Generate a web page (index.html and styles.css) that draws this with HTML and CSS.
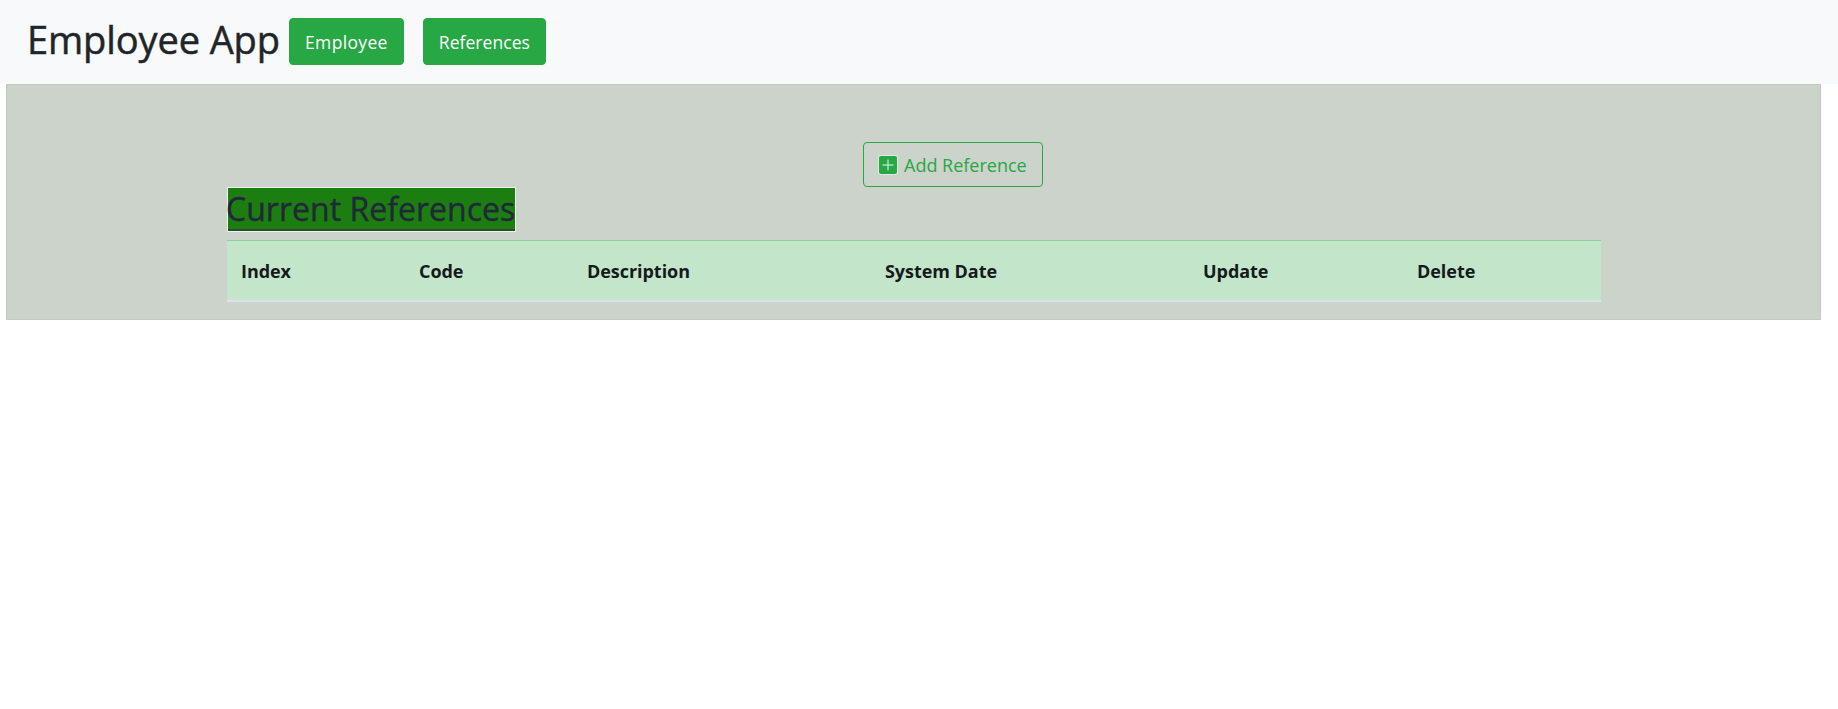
FILE: index.html
```html
<!DOCTYPE html>
<html lang="en">
<head>
<meta charset="utf-8">
<title>Employee App</title>
<link rel="stylesheet" href="styles.css">
</head>
<body>
<nav class="navbar">
  <span class="brand">Employee App</span>
  <a class="btn-nav btn-emp">Employee</a>
  <a class="btn-nav btn-ref">References</a>
</nav>
<main class="panel">
  <div class="content">
    <div class="add-row">
      <button class="btn-add">
        <svg class="plus" width="20" height="20" viewBox="0 0 20 20"><rect x="0" y="0" width="20" height="20" rx="3" fill="#e1e8e0"/><rect x="1" y="1" width="18" height="18" rx="2" fill="#28a745"/><path d="M10 4.5v11M4.5 10h11" stroke="#e8f5ea" stroke-width="1" fill="none"/></svg>
        <span>Add Reference</span>
      </button>
    </div>
    <h2 class="title">Current References</h2>
    <table class="refs">
      <thead>
        <tr>
          <th class="c1">Index</th>
          <th class="c2">Code</th>
          <th class="c3">Description</th>
          <th class="c4">System Date</th>
          <th class="c5">Update</th>
          <th class="c6">Delete</th>
        </tr>
      </thead>
    </table>
  </div>
</main>
</body>
</html>
```
FILE: styles.css
```css
* { box-sizing: border-box; }
html, body { margin: 0; background: #fff; }
body { font-family: "Open Sans", "Noto Sans", sans-serif; color: #212529; }
.navbar {
  display: flex;
  align-items: center;
  height: 84px;
  padding: 0 0 1px 27px;
  background: #f8f9fa;
}
.brand { width: 262px; padding-bottom: 4px; font-size: 38px; line-height: 1.2; letter-spacing: -0.1px; color: #212529; -webkit-text-stroke: 0.5px #212529; white-space: nowrap; }
.btn-nav {
  display: flex;
  align-items: center;
  justify-content: center;
  height: 47px;
  margin-right: 19px;
  padding: 0 15px;
  background: #28a745;
  border: 1px solid #28a745;
  border-radius: 4px;
  color: #fff;
  font-size: 17.5px;
}
.btn-emp { letter-spacing: 0.35px; }
.btn-ref { letter-spacing: 0.05px; }
.panel {
  width: 1815px;
  height: 236px;
  margin-left: 6px;
  background: #ccd3ca;
  border: 1px solid #c2cbc0;
  padding-top: 57px;
}
.content { width: 1374px; margin-left: 220px; }
.add-row { display: flex; padding-left: 636px; }
.btn-add {
  display: flex;
  align-items: center;
  gap: 6px;
  width: 180px;
  height: 45px;
  padding: 0 0 0 14px;
  background: transparent;
  border: 1px solid #28a745;
  border-radius: 4px;
  color: #28a745;
  font-family: inherit;
  font-size: 18px;
  white-space: nowrap;
}
.plus { display: block; flex: none; margin-top: 1px; }
.title {
  display: table;
  margin: 0 0 8px;
  height: 45px;
  width: 289px;
  background: #1c7d10;
  border: 1px solid #eef2ee;
  box-shadow: inset 0 -2px 0 #2b4a35;
  color: #22283a;
  font-size: 32px;
  font-weight: 400;
  line-height: 41px;
  letter-spacing: 0.02px;
  text-indent: -2px;
  -webkit-text-stroke: 0.35px #22283a;
  white-space: nowrap;
}
.refs {
  width: 1374px;
  border-collapse: collapse;
  table-layout: fixed;
  background: #c3e6cb;
}
.refs th {
  height: 60px;
  padding: 2px 0 0 14px;
  border-top: 1px solid #8fd19e;
  border-bottom: 2px solid #dee2e6;
  color: #16191c;
  font-size: 18px;
  font-weight: 700;
  letter-spacing: -0.05px;
  text-align: left;
}
.c1 { width: 178px; }
.c2 { width: 168px; }
.c3 { width: 298px; }
.c4 { width: 318px; }
.c5 { width: 214px; }
.c6 { width: 198px; }
```
